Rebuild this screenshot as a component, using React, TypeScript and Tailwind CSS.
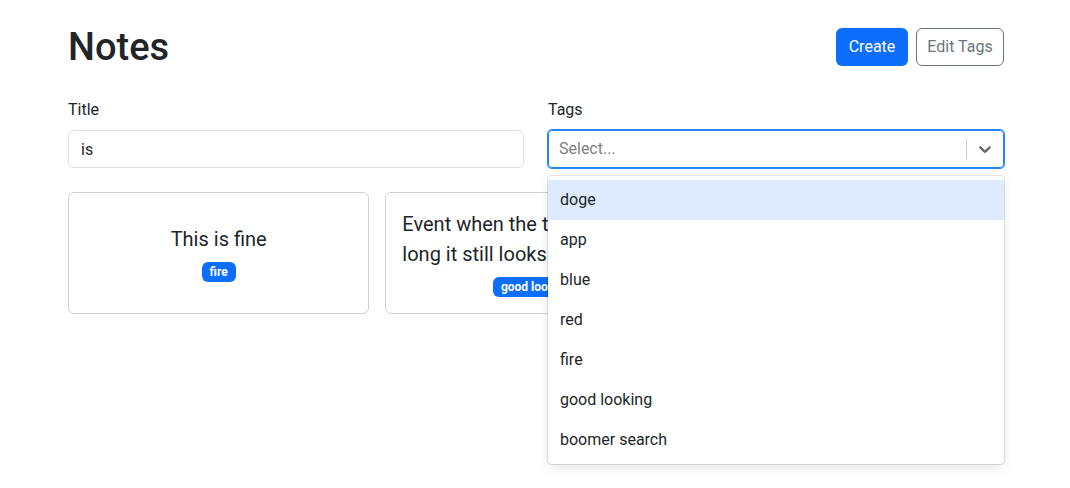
import React from "react";

const tags = ["doge", "app", "blue", "red", "fire", "good looking", "boomer search"];

const notes = [
  { title: "This is fine", tags: ["fire"] },
  { title: "Event when the title is too long it still looks good", tags: ["good looking"] },
  { title: "It is what it is", tags: ["doge"] },
];

const Chevron: React.FC = () => (
  <svg viewBox="0 0 20 20" width="20" height="20" fill="currentColor" aria-hidden="true">
    <path d="M4.516 7.548c0.436-0.446 1.043-0.481 1.576 0l3.908 3.747 3.908-3.747c0.533-0.481 1.141-0.446 1.574 0 0.436 0.445 0.408 1.197 0 1.615-0.406 0.418-4.695 4.502-4.695 4.502-0.217 0.223-0.502 0.335-0.787 0.335s-0.57-0.112-0.789-0.335c0 0-4.287-4.084-4.695-4.502s-0.436-1.17 0-1.615z" />
  </svg>
);

const App: React.FC = () => {
  return (
    <div className="min-h-[488px] bg-white text-[#212529] font-['Roboto','Liberation_Sans',sans-serif] text-base leading-6">
      <div className="ml-[68px] w-[936px] pt-6">
        <div className="flex items-center justify-between h-[46px]">
          <h1 className="text-[38px] leading-[46px] font-medium">Notes</h1>
          <div className="flex gap-2">
            <button className="w-[72px] h-[38px] rounded-md bg-[#0d6efd] text-white">Create</button>
            <button className="w-[88px] h-[38px] rounded-md border border-[#6c757d] text-[#6c757d]">
              Edit Tags
            </button>
          </div>
        </div>

        <div className="grid grid-cols-2 gap-6 mt-7">
          <div>
            <label className="block mb-2">Title</label>
            <input
              readOnly
              value="is"
              className="w-full h-[38px] px-3 rounded-md border border-[#dee2e6] outline-none"
            />
          </div>
          <div>
            <label className="block mb-2">Tags</label>
            <div className="relative">
              <div className="flex items-center h-[38px] rounded border border-[#2684ff] shadow-[0_0_0_1px_#2684ff]">
                <div className="flex-1 pl-[10px] text-[#808080]">Select...</div>
                <span className="w-px h-5 bg-[#cccccc]" />
                <span className="p-2 text-[#666666]">
                  <Chevron />
                </span>
              </div>
              <div className="absolute left-0 right-0 top-full mt-2 z-10 bg-white rounded py-1 shadow-[0_0_0_1px_rgba(0,0,0,0.1),0_4px_11px_rgba(0,0,0,0.1)]">
                {tags.map((t, i) => (
                  <div key={t} className={`px-3 py-2 ${i === 0 ? "bg-[#deebff]" : ""}`}>
                    {t}
                  </div>
                ))}
              </div>
            </div>
          </div>
        </div>

        <div className="grid grid-cols-3 gap-4 mt-6">
          {notes.map((n) => (
            <div key={n.title} className="rounded-md border border-[#d2d2d2] p-4">
              <div className="flex flex-col items-center justify-center gap-2 h-full">
                <span className="text-xl leading-[30px]">{n.title}</span>
                <div className="flex gap-1">
                  {n.tags.map((t) => (
                    <span
                      key={t}
                      className="bg-[#0d6efd] text-white text-xs leading-3 font-bold px-[8px] py-[4px] rounded-md"
                    >
                      {t}
                    </span>
                  ))}
                </div>
              </div>
            </div>
          ))}
        </div>
      </div>
    </div>
  );
};

export default App;
